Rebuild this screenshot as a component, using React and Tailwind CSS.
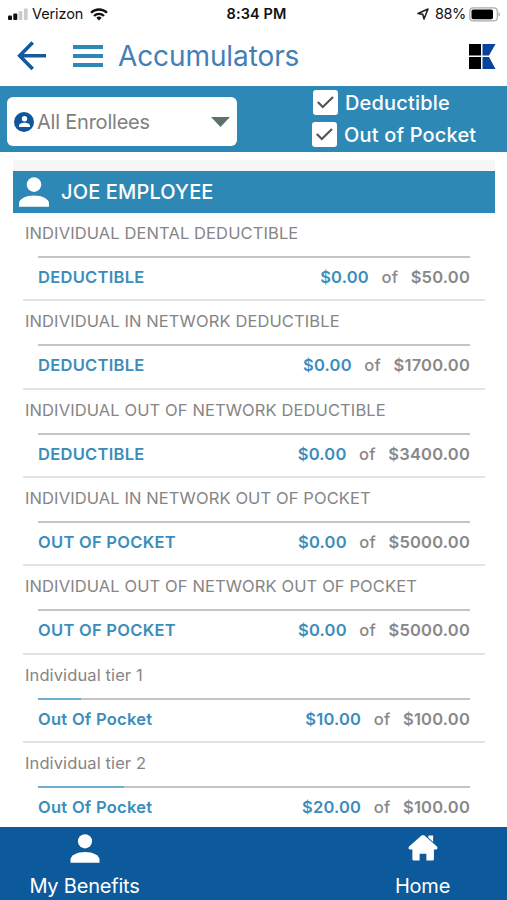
const rows = [
  { title: 'INDIVIDUAL DENTAL DEDUCTIBLE', label: 'DEDUCTIBLE', used: '$0.00', total: '$50.00', pct: 0 },
  { title: 'INDIVIDUAL IN NETWORK DEDUCTIBLE', label: 'DEDUCTIBLE', used: '$0.00', total: '$1700.00', pct: 0 },
  { title: 'INDIVIDUAL OUT OF NETWORK DEDUCTIBLE', label: 'DEDUCTIBLE', used: '$0.00', total: '$3400.00', pct: 0 },
  { title: 'INDIVIDUAL IN NETWORK OUT OF POCKET', label: 'OUT OF POCKET', used: '$0.00', total: '$5000.00', pct: 0 },
  { title: 'INDIVIDUAL OUT OF NETWORK OUT OF POCKET', label: 'OUT OF POCKET', used: '$0.00', total: '$5000.00', pct: 0 },
  { title: 'Individual tier 1', label: 'Out Of Pocket', used: '$10.00', total: '$100.00', pct: 10 },
  { title: 'Individual tier 2', label: 'Out Of Pocket', used: '$20.00', total: '$100.00', pct: 20 },
];

function Person({ className }) {
  return (
    <svg viewBox="0 0 30 30" className={className} fill="currentColor">
      <circle cx="15" cy="7.6" r="7.3" />
      <path d="M0 29.800V26.500c0-4.600 7-8 15-8s15 3.400 15 8v3.300z" />
    </svg>
  );
}

function StatusBar() {
  return (
    <div className="flex h-7 items-center text-[15px] leading-7 text-[#111]">
      <div className="flex w-[169px] items-center pl-2">
        <svg className="h-[13px] w-5 shrink-0" viewBox="0 0 20 13">
          <rect x="0" y="7.500" width="4" height="4.500" rx="1" fill="#111" />
          <rect x="5.300" y="5.500" width="4" height="6.500" rx="1" fill="#111" />
          <rect x="10.600" y="3" width="3.800" height="9" rx="1" fill="#ccc" />
          <rect x="15.900" y="0.500" width="3.800" height="11.500" rx="1" fill="#ccc" />
        </svg>
        <span className="ml-[4px] w-[51px] whitespace-nowrap text-[14.5px] tracking-[-0.1px]">Verizon</span>
        <svg className="ml-[7px] h-[13px] w-[18px] shrink-0" viewBox="0 0 18 13" fill="none" stroke="#111" strokeWidth="2.300">
          <path d="M1 4.800a11.300 11.300 0 0 1 16 0" />
          <path d="M4 8a7 7 0 0 1 10 0" />
          <path d="M6.300 9.800a3.800 3.800 0 0 1 5.400 0L9 12.600z" fill="#111" stroke="none" />
        </svg>
      </div>
      <div className="w-[175px] text-center text-[14.5px] font-semibold tracking-[0.1px]">8:34 PM</div>
      <div className="flex flex-1 items-center justify-end pr-[6px]">
        <svg className="mr-[6px] h-[12px] w-[12px]" viewBox="0 0 12 12" fill="none" stroke="#222" strokeWidth="1.600" strokeLinejoin="round">
          <path d="M1 5.500 11 1 7 11 5.800 6.400z" />
        </svg>
        <span className="w-[31px] whitespace-nowrap text-[14.5px] tracking-[-0.5px]">88%</span>
        <svg className="ml-[3px] h-[15px] w-[32px]" viewBox="0 0 32 15">
          <rect x="0.800" y="0.900" width="27.500" height="13" rx="3.500" fill="#fff" stroke="#aaa" strokeWidth="1.200" />
          <rect x="2.500" y="2.500" width="21.500" height="9.800" rx="1.800" fill="#000" />
          <path d="M29.500 5.300c2 .6 2 3.600 0 4.200z" fill="#aaa" />
        </svg>
      </div>
    </div>
  );
}

function Header() {
  return (
    <header className="flex h-[58px] items-center pl-[17px] pr-[11px] pb-[2px]">
      <svg className="h-[30px] w-[30px]" viewBox="0 0 30 30" fill="none" stroke="#17599b" strokeWidth="3.600">
        <path d="M15.700 1.500 2.700 14.700l13 13.200M2.700 14.700H29" />
      </svg>
      <div className="ml-[26px] flex w-[30px] flex-col gap-[5px]">
        <div className="h-1 bg-[#2e88b5]" />
        <div className="h-1 bg-[#2e88b5]" />
        <div className="h-1 bg-[#2e88b5]" />
      </div>
      <h1 className="ml-[15px] whitespace-nowrap text-[28px] leading-8 tracking-[-0.1px] text-[#437fb5]">Accumulators</h1>
      <svg className="ml-auto h-[27px] w-[28px]" viewBox="0 0 28 27">
        <path d="M1 1h12v11.500H1zM1 14h12v12H1z" fill="#000" />
        <path d="M14.500 1H27.500L21 12.500H14.500zM14.500 14H21L27.500 26H14.500z" fill="#07449a" />
      </svg>
    </header>
  );
}

function Check({ label, className }) {
  return (
    <div className={className}>
      <svg className="h-[25px] w-[25px] shrink-0" viewBox="0 0 25 25">
        <rect width="25" height="25" rx="3" fill="#fff" />
        <path d="m4.800 12 5 5L20 7" fill="none" stroke="#555" strokeWidth="2.200" />
      </svg>
      <span className="whitespace-nowrap pt-px">{label}</span>
    </div>
  );
}

function Filters() {
  return (
    <div className="flex h-[66px] bg-[#2e88b5]">
      <div className="ml-[7px] mt-[11px] flex h-[49px] w-[230px] items-center rounded-[6px] bg-white pl-[7px] pr-[7px]">
        <div className="flex h-5 w-5 items-center justify-center rounded-full bg-[#11559c]">
          <Person className="h-[11px] w-[11px] text-white" />
        </div>
        <span className="ml-[3px] whitespace-nowrap text-[20px] tracking-[-0.22px] text-[#808080]">All Enrollees</span>
        <svg className="ml-auto h-[10px] w-[19px]" viewBox="0 0 19 10">
          <path d="M0 0h19L9.500 10z" fill="#5d706c" />
        </svg>
      </div>
      <div className="ml-[75px] mt-1 flex flex-col gap-[7px] text-[20px] font-medium leading-[25px] tracking-[0.17px] text-white">
        <Check label="Deductible" className="flex h-[25px] gap-[7px] pl-px" />
        <Check label="Out of Pocket" className="flex h-[25px] gap-[7px]" />
      </div>
    </div>
  );
}

function Row({ row }) {
  return (
    <div className="ml-[10px] mr-[10px] h-[88.35px] shrink-0 border-b-2 border-[#e3e3e3]">
      <div className="h-[43px] whitespace-nowrap pl-[2px] pt-[8px] text-[16.5px] leading-6 tracking-[0.11px] text-[#858585]">{row.title}</div>
      <div className="ml-[15px] mr-[15px] h-[2px] bg-[#c4c4c4]">
        <div className="h-full bg-[#6eafcd]" style={{ width: `${row.pct}%` }} />
      </div>
      <div className="ml-[15px] mr-[15px] mt-[7px] flex whitespace-nowrap text-[16.5px] font-semibold leading-6 tracking-[0.28px] text-[#888]">
        <span className="text-[#3b8dbc]">{row.label}</span>
        <span className="ml-auto tracking-[0.2px] text-[#3b8dbc]">{row.used}</span>
        <span className="ml-[12.5px] font-medium">of</span>
        <span className="ml-[12.5px] tracking-[0.2px]">{row.total}</span>
      </div>
    </div>
  );
}

export default function App() {
  return (
    <div className="flex h-[900px] w-[507px] flex-col overflow-hidden bg-white font-['Inter','Liberation_Sans',sans-serif]">
      <StatusBar />
      <Header />
      <Filters />
      <main className="flex min-h-0 flex-1 flex-col overflow-hidden pl-[13px] pr-3 pt-2">
        <div className="h-[11px] shrink-0 bg-[#f6f6f6]" />
        <div className="flex h-[42px] shrink-0 items-center bg-[#2e88b5] pl-[6px] text-white">
          <Person className="h-[30px] w-[30px]" />
          <span className="ml-[12px] whitespace-nowrap text-[20px] font-medium tracking-[0.15px]">JOE EMPLOYEE</span>
        </div>
        {rows.map((row) => (
          <Row key={row.title} row={row} />
        ))}
      </main>
      <footer className="flex h-[73px] shrink-0 justify-between bg-[#0c5a9b] pt-[7px] text-[20px] leading-7 tracking-[-0.2px] text-white">
        <div className="flex w-[169px] flex-col items-center">
          <Person className="h-[30px] w-[30px]" />
          <span className="mt-[9px] whitespace-nowrap">My Benefits</span>
        </div>
        <div className="flex w-[169px] flex-col items-center">
          <svg className="h-[30px] w-[30px]" viewBox="0 0 30 30" fill="currentColor">
            <path d="M0.300 13.200 13.500 1.600q1.500-1.200 3 0L29.700 13.200Q30.500 16 28.500 16H26.300V26a1.500 1.500 0 0 1-1.500 1.500H18.500V20.500H11.500v7H5.500A1.500 1.500 0 0 1 4 26V16H1.600Q-.5 16 .3 13.200z" />
            <path d="M20.500 1.500h5v6.800l-5-4.300z" />
          </svg>
          <span className="mt-[9px] whitespace-nowrap">Home</span>
        </div>
      </footer>
    </div>
  );
}
